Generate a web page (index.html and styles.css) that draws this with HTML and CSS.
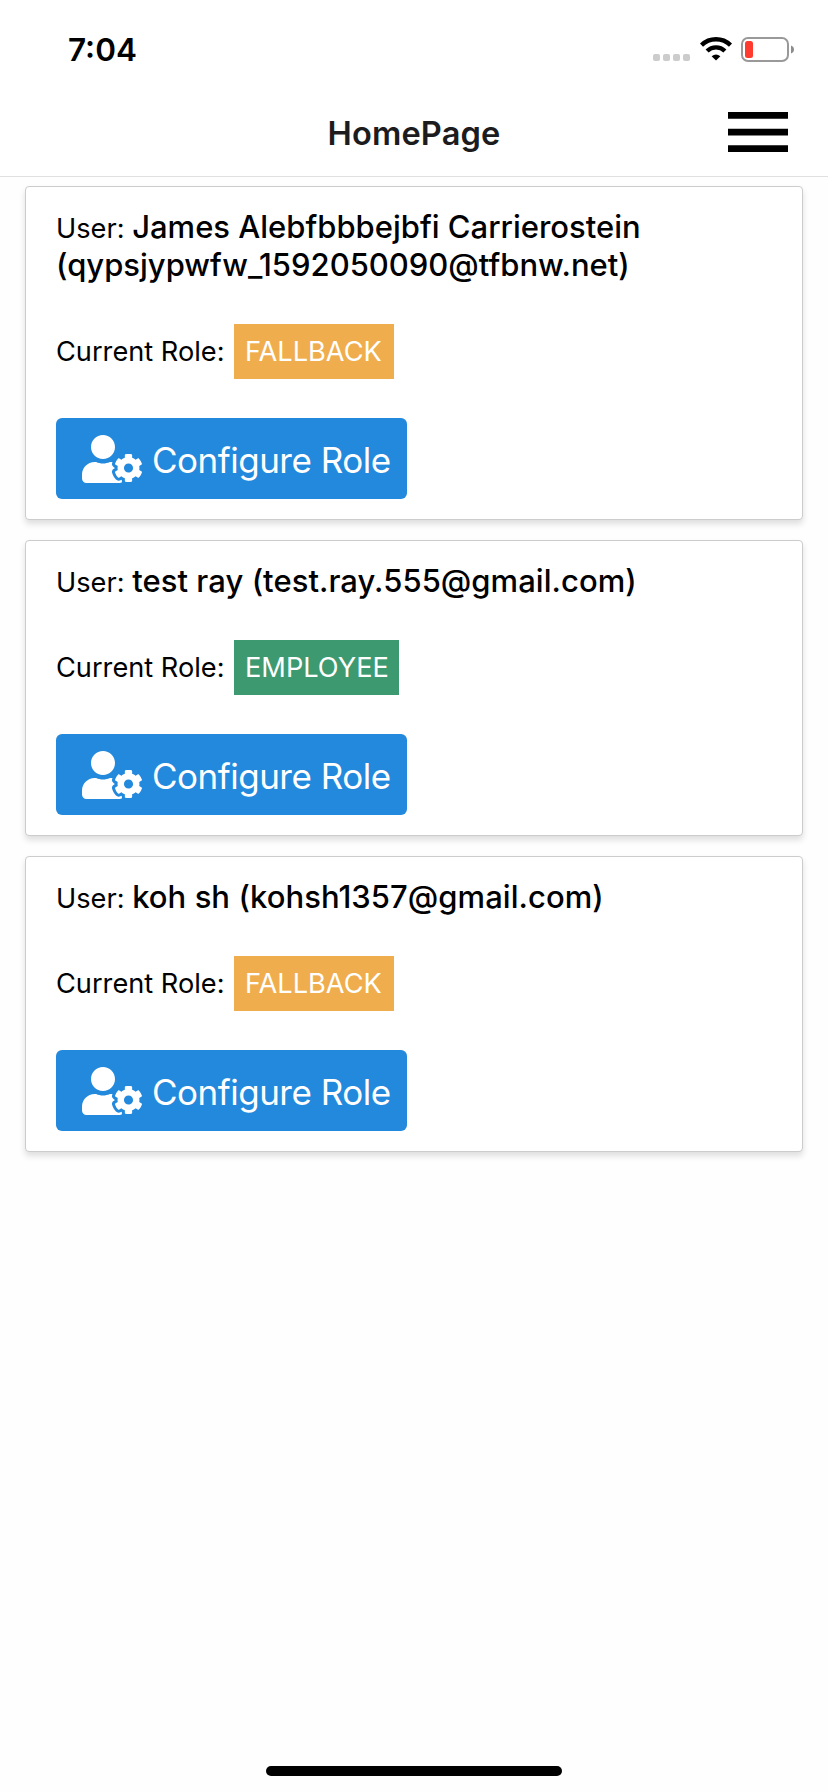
FILE: index.html
```html
<!DOCTYPE html>
<html lang="en">
<head>
<meta charset="utf-8">
<title>HomePage</title>
<link rel="stylesheet" href="styles.css">
</head>
<body>
<svg class="defs" width="0" height="0" aria-hidden="true">
  <symbol id="user-cog" viewBox="0 0 640 512"><path d="M610.5 373.3c2.6-14.1 2.6-28.5 0-42.6l25.8-14.9c3-1.7 4.3-5.2 3.3-8.5-6.7-21.6-18.2-41.2-33.2-57.4-2.3-2.5-6-3.1-9-1.4l-25.8 14.9c-10.9-9.3-23.4-16.5-36.9-21.3v-29.8c0-3.4-2.4-6.4-5.7-7.1-22.3-5-45-4.8-66.2 0-3.3.7-5.7 3.7-5.7 7.1v29.8c-13.5 4.8-26 12-36.9 21.3l-25.8-14.9c-2.9-1.7-6.7-1.1-9 1.4-15 16.2-26.5 35.8-33.2 57.4-1 3.3.4 6.8 3.3 8.5l25.8 14.9c-2.6 14.1-2.6 28.5 0 42.6l-25.8 14.9c-3 1.7-4.3 5.2-3.3 8.5 6.7 21.6 18.2 41.1 33.2 57.4 2.3 2.5 6 3.1 9 1.4l25.8-14.9c10.9 9.3 23.4 16.5 36.9 21.3v29.8c0 3.4 2.4 6.4 5.7 7.1 22.3 5 45 4.8 66.2 0 3.3-.7 5.7-3.7 5.7-7.1v-29.8c13.5-4.8 26-12 36.9-21.3l25.8 14.9c2.9 1.7 6.7 1.1 9-1.4 15-16.2 26.5-35.8 33.2-57.4 1-3.3-.4-6.8-3.3-8.5l-25.8-14.9zM496 400.5c-26.8 0-48.5-21.8-48.5-48.5s21.8-48.5 48.5-48.5 48.5 21.8 48.5 48.5-21.7 48.5-48.5 48.5zM224 256c70.7 0 128-57.3 128-128S294.7 0 224 0 96 57.3 96 128s57.3 128 128 128zm201.2 226.5c-2.3-1.2-4.6-2.6-6.8-3.9l-7.9 4.6c-6 3.4-12.8 5.3-19.6 5.3-10.9 0-21.4-4.6-28.9-12.6-18.3-19.8-32.3-43.9-40.2-69.6-5.5-17.7 1.9-36.4 17.9-45.7l7.9-4.6c-.1-2.6-.1-5.2 0-7.8l-7.9-4.6c-16-9.2-23.4-28-17.9-45.7.9-2.9 2.2-5.8 3.2-8.7-3.8-.3-7.5-1.2-11.4-1.2h-16.7c-22.2 10.2-46.9 16-72.9 16s-50.6-5.8-72.9-16h-16.7C60.2 288 0 348.2 0 422.4V464c0 26.5 21.5 48 48 48h352c10.1 0 19.5-3.2 27.2-8.5-1.2-3.8-2-7.7-2-11.8v-9.2z"/></symbol>
</svg>
<div class="screen">
  <div class="status-bar">
    <span class="time">7:04</span>
    <div class="status-icons">
      <div class="dots"><i></i><i></i><i></i><i></i></div>
      <svg class="wifi" width="32" height="24" viewBox="0 0 32 24" fill="none" stroke="#000">
        <path d="M1.5 8.1A20.8 20.8 0 0 1 30.5 8.1" stroke-width="4.4"/>
        <path d="M7.1 14A12.6 12.6 0 0 1 24.9 14" stroke-width="4.3"/>
        <path d="M16 23.6L11.6 19.2Q16 15.6 20.4 19.2Z" fill="#000" stroke="none"/>
      </svg>
      <svg class="battery" width="54" height="25" viewBox="0 0 54 25">
        <rect x="1" y="1" width="46" height="23" rx="6" fill="none" stroke="#999" stroke-width="2"/>
        <rect x="4" y="4" width="8" height="17" rx="2.5" fill="#ff3b30"/>
        <path d="M50 8.5Q53 9.6 53 12.5T50 16.5Z" fill="#8c8c8c"/>
      </svg>
    </div>
  </div>
  <header class="nav">
    <h1 class="title">HomePage</h1>
    <svg class="menu" width="60" height="41" viewBox="0 0 60 41"><path d="M0 0h60v6.7H0zM0 16.7h60v6.7H0zM0 33.3h60V40H0z"/></svg>
  </header>
  <main class="list">
    <section class="card">
      <p class="user"><span class="label">User: </span><b class="name">James Alebfbbbejbfi Carrierostein</b><br><b class="name">(qypsjypwfw_1592050090@tfbnw.net)</b></p>
      <div class="role"><span class="role-label">Current Role:</span><span class="badge fallback">FALLBACK</span></div>
      <a class="button"><svg class="icon" width="60" height="48"><use href="#user-cog"/></svg><span class="button-text">Configure Role</span></a>
    </section>
    <section class="card">
      <p class="user"><span class="label">User: </span><b class="name name-wide">test ray (test.ray.555@gmail.com)</b></p>
      <div class="role"><span class="role-label">Current Role:</span><span class="badge employee">EMPLOYEE</span></div>
      <a class="button"><svg class="icon" width="60" height="48"><use href="#user-cog"/></svg><span class="button-text">Configure Role</span></a>
    </section>
    <section class="card">
      <p class="user"><span class="label">User: </span><b class="name name-wide">koh sh (kohsh1357@gmail.com)</b></p>
      <div class="role"><span class="role-label">Current Role:</span><span class="badge fallback">FALLBACK</span></div>
      <a class="button"><svg class="icon" width="60" height="48"><use href="#user-cog"/></svg><span class="button-text">Configure Role</span></a>
    </section>
  </main>
  <div class="home-indicator"></div>
</div>
</body>
</html>
```

FILE: styles.css
```css
* { box-sizing: border-box; }
body { margin: 0; background: #fff; color: #000; font-family: Inter, "Liberation Sans", sans-serif; }
.defs { display: block; }
.screen { display: flex; flex-direction: column; width: 828px; height: 1792px; background: #fefefe; overflow: hidden; }

.status-bar { display: flex; justify-content: space-between; align-items: flex-start; height: 88px; padding: 30px 33px 0 68px; background: #fff; }
.time { font-size: 31.5px; font-weight: 600; line-height: 40px; }
.status-icons { display: flex; align-items: flex-start; padding-top: 7px; }
.dots { display: flex; gap: 3px; padding-top: 17px; margin-right: 10px; }
.dots i { width: 7px; height: 7px; border-radius: 2px; background: #ccc; }
.wifi { margin-right: 9px; }

.nav { display: grid; grid-template-columns: 1fr auto 1fr; align-items: center; height: 89px; padding: 0 40px; border-bottom: 1px solid #e0e0e0; background: #fff; }
.title { grid-column: 2; margin: 0; padding-top: 1px; font-size: 32.6px; font-weight: 600; line-height: 40px; letter-spacing: .15px; color: #1c1c1e; }
.menu { justify-self: end; }

.list { display: flex; flex-direction: column; gap: 20px; flex: 1; padding: 9px 25px 0; }
.card { padding: 21px 30px 20px; border: 1px solid #ccc; border-radius: 4px; background: #fff; box-shadow: 0 4px 6px rgba(0, 0, 0, .13); }
.user { margin: 0; font-size: 31px; line-height: 38px; white-space: nowrap; }
.label { font-size: 27.2px; line-height: 30px; }
.name { font-weight: 500; }
.name-wide { letter-spacing: .05px; }
.role { display: flex; align-items: center; height: 55px; margin: 40px 0 39px; font-size: 27.2px; line-height: 55px; white-space: nowrap; }
.role-label { width: 178px; }
.badge { padding: 0 11px; color: #fff; }
.fallback { width: 160px; background: #f0ad4e; }
.employee { width: 165px; background: #3d9970; }
.button { display: flex; align-items: center; width: 351px; height: 81px; padding-left: 26px; border-radius: 6px; background: #2289dc; color: #fff; white-space: nowrap; }
.icon { margin-right: 10px; fill: #fff; }
.button-text { font-size: 35px; font-weight: 400; padding-top: 3px; line-height: 42px; letter-spacing: -.5px; }

.home-indicator { align-self: center; width: 296px; height: 10px; margin-bottom: 16px; border-radius: 5px; background: #000; }
```
